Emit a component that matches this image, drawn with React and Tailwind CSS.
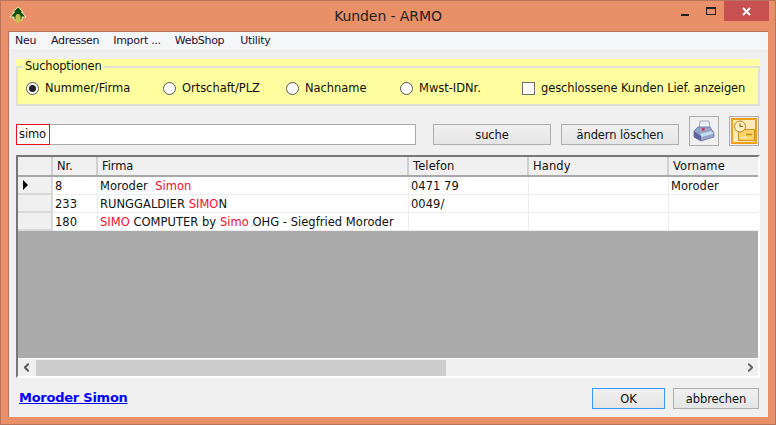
import { ChevronLeft, ChevronRight } from 'lucide-react'

const cols = 'grid grid-cols-[35px_45px_311px_120px_140px_89px]'

function Hit({ children }) {
  return <span className="text-[#f01030]">{children}</span>
}

const rows = [
  { nr: '8', firma: <>Moroder  <Hit>Simon</Hit></>, tel: '0471 79', vor: 'Moroder', mark: true },
  { nr: '233', firma: <>RUNGGALDIER <Hit>SIMO</Hit>N</>, tel: '0049/', vor: '' },
  { nr: '180', firma: <><Hit>SIMO</Hit> COMPUTER by <Hit>Simo</Hit> OHG - Siegfried Moroder</>, tel: '', vor: '' },
]

function Radio({ label, checked, className }) {
  return (
    <div className={`flex items-center gap-[6px] ${className}`}>
      <span className="w-[13px] h-[13px] rounded-full border border-[#555] bg-white flex items-center justify-center">
        {checked && <span className="w-[7px] h-[7px] rounded-full bg-[#222]"></span>}
      </span>
      <span className="tracking-[-0.04px]">{label}</span>
    </div>
  )
}

function Btn({ children, className }) {
  return (
    <button className={`h-[21px] pt-[2px] border border-[#adadad] bg-gradient-to-b from-[#f0f0f0] to-[#e5e5e5] text-center ${className}`}>
      {children}
    </button>
  )
}

function App() {
  return (
    <div className="w-[776px] h-[425px] overflow-hidden bg-[#ea9068] border border-[#b8735a] text-[11.5px] text-[#111] font-['DejaVu_Sans',sans-serif] tracking-[-0.1px] flex flex-col">
      {/* titelleiste */}
      <div className="h-[30px] shrink-0 flex items-start relative">
        <svg width="18" height="18" viewBox="0 0 18 18" className="ml-[8px] mt-[5px]">
          <path d="M9 1 L14 6 H12.5 L17 11 H13 V14 H5 V11 H1 L5.5 6 H4 Z" fill="#0e4f12" stroke="#f8f2a8" strokeWidth="1" />
          <rect x="6.5" y="8" width="5" height="9" rx="2.5" fill="#c8c050" />
        </svg>
        <div className="absolute left-0 right-0 top-[5px] text-center text-[14px] tracking-[-0.1px] text-[#222]">Kunden - ARMO</div>
        <div className="ml-auto mr-[6px] flex items-start">
          <div className="w-[27px] h-[20px] flex items-center justify-center pt-[5px]">
            <span className="w-[8px] h-[2px] bg-[#222] mt-[2px]"></span>
          </div>
          <div className="w-[26px] h-[20px] flex items-center justify-center">
            <span className="w-[10px] h-[8px] border border-[#222] border-t-2"></span>
          </div>
          <div className="w-[45px] h-[20px] bg-[#c75050] flex items-center justify-center text-white">
            <svg width="9" height="9" viewBox="0 0 9 9"><path d="M1 1 L8 8 M8 1 L1 8" stroke="#fff" strokeWidth="2" /></svg>
          </div>
        </div>
      </div>

      {/* fensterinhalt */}
      <div className="mx-[7px] w-[760px] h-[386px] bg-[#f0f0f0] border-t border-l border-[#b8735a] flex flex-col">
        <div className="h-[19px] bg-[#f5f6f7] border-b border-[#e8e8e8] flex items-center pl-[6px] gap-[14px] text-[#1a1030] text-[11px] tracking-[-0.3px]">
          <span>Neu</span>
          <span className="ml-[1px]">Adressen</span>
          <span>Import ...</span>
          <span className="mr-[2px]">WebShop</span>
          <span>Utility</span>
        </div>

        {/* suchoptionen */}
        <div className="mx-[7px] mt-[8px] w-[744px] h-[47px] bg-[#ffffa0]">
          <fieldset className="mt-[1px] h-[46px] border-2 border-[#e0e0d8] pl-[8px] flex items-center">
            <legend className="ml-[-3px] px-[2px] leading-[13px] tracking-[-0.2px]">Suchoptionen</legend>
            <Radio label="Nummer/Firma" checked className="w-[137px]" />
            <Radio label="Ortschaft/PLZ" className="w-[123px]" />
            <Radio label="Nachname" className="w-[114px]" />
            <Radio label="Mwst-IDNr." className="w-[122px]" />
            <div className="flex items-center gap-[6px]">
              <span className="w-[13px] h-[13px] border border-[#707070] bg-white"></span>
              <span>geschlossene Kunden Lief. anzeigen</span>
            </div>
          </fieldset>
        </div>

        {/* suche */}
        <div className="mx-[7px] mt-[9px] h-[31px] flex items-center gap-[10px]">
          <div className="w-[400px] h-[21px] mt-[7px] bg-white border border-[#aaa] flex">
            <span className="-ml-px -mt-px h-[21px] w-[34px] border border-[#e81020] pl-[2px] leading-[18px]">simo</span>
          </div>
          <Btn className="ml-[7px] w-[118px] mt-[7px]">suche</Btn>
          <Btn className="w-[118px] mt-[7px]">ändern löschen</Btn>
          <div className="w-[30px] h-[30px] border border-[#adadad] flex items-center justify-center">
            <svg width="24" height="24" viewBox="0 0 24 24">
              <path d="M8 2 H17 L18 9 H7 Z" fill="#eceef2" stroke="#9098b0" strokeWidth="0.8" />
              <path d="M2 12 L6 8 H18 L22 14 V18 L9 22 L2 18 Z" fill="#9aa2c8" stroke="#5a6498" strokeWidth="0.7" />
              <path d="M2 12 L9 17 V22 L2 18 Z" fill="#5c66a4" />
              <path d="M8 15 L19 12 L22 14.5 L10 18 Z" fill="#bfe0f4" />
              <rect x="10" y="9" width="2.5" height="2.5" fill="#e03040" />
            </svg>
          </div>
          <div className="w-[30px] h-[30px] border border-[#adadad] flex items-center justify-center">
            <div className="w-[26px] h-[26px] border-2 border-[#f0a018] bg-[#fdeab8] flex items-center justify-center">
              <svg width="22" height="22" viewBox="0 0 22 22">
                <rect x="5.5" y="9.5" width="16" height="11" fill="#fbd468" stroke="#d09420" />
                <path d="M13 14.5 H19" stroke="#c88c18" strokeWidth="1.5" />
                <path d="M8 17.5 H14" stroke="#fff4c0" strokeWidth="1.5" />
                <circle cx="7" cy="6.5" r="5.5" fill="#fdf0c0" stroke="#b88420" />
                <path d="M7 3.5 V6.5 H10" fill="none" stroke="#8a6420" strokeWidth="1.2" />
              </svg>
            </div>
          </div>
        </div>

        {/* tabelle */}
        <div className="mx-[7px] mt-[9px] w-[744px] h-[223px] border-t-2 border-l-2 border-[#777] border-b-2 border-r-2 border-b-[#fff] border-r-[#fff] bg-[#ababab] flex flex-col">
          <div className={`${cols} h-[20px] bg-[#f0f0f0] border-b-2 border-[#a8a8a8] shrink-0`}>
            <div className="border-r-2 border-[#d0d0d0]"></div>
            <div className="pl-[4px] leading-[18px] border-r-2 border-[#d0d0d0]">Nr.</div>
            <div className="pl-[4px] leading-[18px] border-r-2 border-[#d0d0d0]">Firma</div>
            <div className="pl-[4px] leading-[18px] border-r-2 border-[#d0d0d0] tracking-[0.1px]">Telefon</div>
            <div className="pl-[4px] leading-[18px] border-r-2 border-[#d0d0d0] tracking-[0.1px]">Handy</div>
            <div className="pl-[4px] leading-[18px] tracking-[0.1px]">Vorname</div>
          </div>
          {rows.map((r) => (
            <div key={r.nr} className={`${cols} h-[18px] bg-white shrink-0 tracking-[0.03px]`}>
              <div className="h-[18px] bg-[#f0f0f0] border-r-2 border-b-2 border-[#d8d8d8] flex items-center pl-[5px]">
                {r.mark && <span className="w-0 h-0 border-y-[5px] border-y-transparent border-l-[5px] border-l-black"></span>}
              </div>
              <div className="h-[18px] pl-[2px] leading-[19px] border-r border-b border-[#eee]">{r.nr}</div>
              <div className="h-[18px] pl-[2px] leading-[19px] border-r border-b border-[#eee] whitespace-pre">{r.firma}</div>
              <div className="h-[18px] pl-[2px] leading-[19px] border-r border-b border-[#eee]">{r.tel}</div>
              <div className="h-[18px] border-r border-b border-[#eee]"></div>
              <div className="h-[18px] pl-[2px] leading-[19px] border-b border-[#eee]">{r.vor}</div>
            </div>
          ))}
          <div className="flex-1"></div>
          <div className="h-[18px] bg-[#f0f0f0] border-t border-white flex items-center shrink-0">
            <ChevronLeft size={13} strokeWidth={3.5} className="ml-[2px] text-[#555]" />
            <div className="ml-[3px] w-[410px] h-[16px] bg-[#cdcdcd]"></div>
            <ChevronRight size={13} strokeWidth={3.5} className="ml-auto mr-[1px] text-[#666]" />
          </div>
        </div>

        {/* fuss */}
        <div className="mx-[7px] flex-1 flex items-center pl-[3px] pr-[2px] pt-[1px]">
          <a className="text-[13px] font-bold underline text-[#0000ff] tracking-[-0.25px]">Moroder Simon</a>
          <Btn className="ml-auto w-[73px] border-[#3399ff]!">OK</Btn>
          <Btn className="ml-[8px] w-[86px]">abbrechen</Btn>
        </div>
      </div>
    </div>
  )
}

export default App
